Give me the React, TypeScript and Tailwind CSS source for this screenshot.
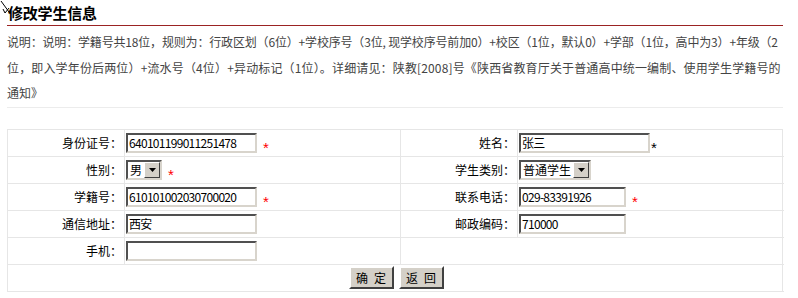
import React from 'react';

const font = { fontFamily: '"Noto Sans CJK SC", "Liberation Sans", sans-serif' };

const TextBox: React.FC<{ value?: string; width?: string }> = ({ value = '', width = 'w-[131px]' }) => (
  <input
    readOnly
    value={value}
    className={`${width} h-[20px] bg-white border-2 border-t-[#505050] border-l-[#505050] border-b-[#d8d4cc] border-r-[#d8d4cc] px-[1px] text-[12px] leading-[16px] tracking-[-0.7px] text-black outline-none`}
    style={font}
  />
);

const Select: React.FC<{ label: string }> = ({ label }) => (
  <div className="inline-flex items-center h-[20px] bg-white border-2 border-t-[#505050] border-l-[#505050] border-b-[#d8d4cc] border-r-[#d8d4cc]">
    <span className="px-[2px] text-[12px] leading-[16px] text-black">{label}</span>
    <span className="w-[16px] h-[16px] bg-[#d4d0c8] border border-t-white border-l-white border-b-[#404040] border-r-[#404040] flex items-center justify-center">
      <svg width="7" height="4" viewBox="0 0 7 4">
        <path d="M0 0h7L3.5 4z" fill="#000" />
      </svg>
    </span>
  </div>
);

const Star: React.FC<{ black?: boolean; gap?: string }> = ({ black, gap = 'ml-[6px]' }) => (
  <span
    className={`${gap} mt-[10px] text-[15px] leading-none ${black ? 'text-black' : 'text-[#ff0000]'}`}
    style={{ fontFamily: '"Liberation Sans", sans-serif' }}
  >
    *
  </span>
);

const Label: React.FC<{ children: React.ReactNode }> = ({ children }) => (
  <div className="border-r border-b border-[#e6e6e6] flex items-center justify-end pr-[2px] text-[12px] text-black">
    {children}
  </div>
);

const Value: React.FC<{ children?: React.ReactNode; last?: boolean }> = ({ children, last }) => (
  <div className={`border-b border-[#e6e6e6] flex items-center pl-[1px] ${last ? '' : 'border-r'}`}>{children}</div>
);

const Button: React.FC<{ a: string; b: string }> = ({ a, b }) => (
  <button className="w-[45px] h-[23px] bg-[#d4d0c8] border-2 border-t-white border-l-white border-b-[#404040] border-r-[#404040] text-[12px] text-black flex items-center justify-center gap-[6px]">
    <span>{a}</span>
    <span>{b}</span>
  </button>
);

export default function App() {
  return (
    <div className="w-[798px] h-[298px] bg-white relative pl-[7px] overflow-hidden" style={font}>
      <svg className="absolute left-0 top-0" width="12" height="16" viewBox="0 0 12 16">
        <path d="M1 1L9 12" stroke="#000" strokeWidth="1" fill="none" />
        <path d="M3 9L5 13L9 8" stroke="#000" strokeWidth="1" fill="none" />
      </svg>
      <div className="w-[776px]">
        <div className="h-[26px] border-b border-[#9b2323] flex items-center pl-[1px]">
          <span className="text-[15px] font-bold text-black leading-none tracking-[-0.2px]">修改学生信息</span>
        </div>
        <div className="pt-[3px] pb-[1px] border-b border-[#ececec] text-[12px] leading-[25.5px] text-[#444] whitespace-nowrap">
          <div className="tracking-[-0.17px]">说明：说明：学籍号共18位，规则为：行政区划（6位）+学校序号（3位, 现学校序号前加0）+校区（1位，默认0）+学部（1位，高中为3）+年级（2</div>
          <div className="tracking-[0.15px]">位，即入学年份后两位）+流水号（4位）+异动标记（1位）。详细请见：陕教[2008]号《陕西省教育厅关于普通高中统一编制、使用学生学籍号的</div>
          <div>通知》</div>
        </div>
        <div className="mt-[21px] grid grid-cols-[117px_276px_117px_266px] auto-rows-[27px] border-t border-l border-r border-[#e6e6e6]">
          <Label>身份证号：</Label>
          <Value>
            <TextBox value="640101199011251478" />
            <Star />
          </Value>
          <Label>姓名：</Label>
          <Value last>
            <TextBox value="张三" />
            <Star black gap="ml-[1px]" />
          </Value>

          <Label>性别：</Label>
          <Value>
            <Select label="男" />
            <Star />
          </Value>
          <Label>学生类别：</Label>
          <Value last>
            <Select label="普通学生" />
          </Value>

          <Label>学籍号：</Label>
          <Value>
            <TextBox value="610101002030700020" />
            <Star />
          </Value>
          <Label>联系电话：</Label>
          <Value last>
            <TextBox value="029-83391926" width="w-[107px]" />
            <Star />
          </Value>

          <Label>通信地址：</Label>
          <Value>
            <TextBox value="西安" />
          </Value>
          <Label>邮政编码：</Label>
          <Value last>
            <TextBox value="710000" width="w-[107px]" />
          </Value>

          <Label>手机：</Label>
          <Value>
            <TextBox />
          </Value>
          <div className="col-span-2 border-b border-[#e6e6e6]" />

          <div className="col-span-4 border-b border-[#e6e6e6] flex items-center justify-center gap-[5px]">
            <Button a="确" b="定" />
            <Button a="返" b="回" />
          </div>
        </div>
      </div>
    </div>
  );
}
